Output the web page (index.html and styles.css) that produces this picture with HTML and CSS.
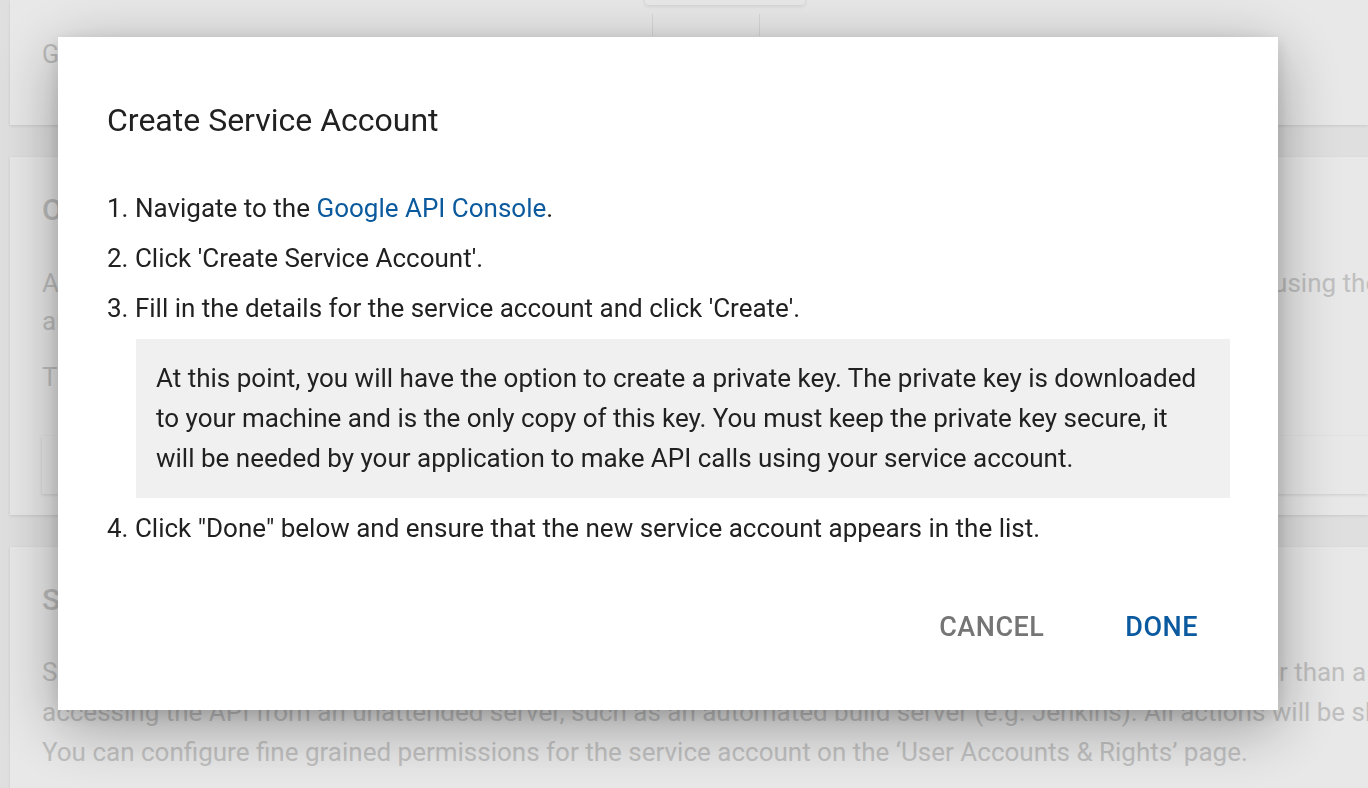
FILE: index.html
```html
<!DOCTYPE html>
<html lang="en">
<head>
<meta charset="utf-8">
<title>Create Service Account</title>
<link rel="stylesheet" href="styles.css">
</head>
<body>
<div class="page">
  <div class="top-tab"></div>
  <section class="card card-general">
    <div class="card-title small">General</div>
    <div class="field-box"></div>
  </section>
  <section class="card card-clients">
    <div class="card-title">OAuth Clients</div>
    <p class="card-text">Applications can access the API on behalf of a user by authenticating with the OAuth 2.0 protocol flow and using the<br>authorization code flow to obtain an access token for the user.</p>
    <p class="card-text">There are no OAuth clients configured.</p>
    <div class="inner-box"></div>
  </section>
  <section class="card card-service">
    <div class="card-title">Service Accounts</div>
    <p class="card-text">Service accounts can be used in cases where the API needs to be accessed by an external application rather than a user, for example when<br>accessing the API from an unattended server, such as an automated build server (e.g. Jenkins). All actions will be shown as performed by the service account.<br>You can configure fine grained permissions for the service account on the ‘User Accounts &amp; Rights’ page.</p>
  </section>
</div>
<div class="overlay"></div>
<div class="dialog" role="dialog">
  <h1 class="dialog-title">Create Service Account</h1>
  <ol class="steps">
    <li>1. Navigate to the <a class="link" href="#">Google API Console</a>.</li>
    <li>2. Click 'Create Service Account'.</li>
    <li>3. Fill in the details for the service account and click 'Create'.
      <div class="note">At this point, you will have the option to create a private key. The private key is downloaded to your machine and is the only copy of this key. You must keep the private key secure, it will be needed by your application to make API calls using your service account.</div>
    </li>
    <li>4. Click "Done" below and ensure that the new service account appears in the list.</li>
  </ol>
  <div class="actions">
    <button class="btn btn-cancel">Cancel</button>
    <button class="btn btn-done">Done</button>
  </div>
</div>
</body>
</html>
```

FILE: styles.css
```css
* { box-sizing: border-box; }
html, body {
  margin: 0;
  padding: 0;
  height: 100%;
  overflow: hidden;
}
body {
  font-family: Roboto, "Liberation Sans", sans-serif;
  background: #f6f6f6;
  color: #212121;
}
.page {
  padding: 0 0 0 10px;
  display: flex;
  flex-direction: column;
  gap: 32px;
  position: relative;
}
.top-tab {
  position: absolute;
  left: 645px;
  top: -20px;
  width: 160px;
  height: 25px;
  background: #fff;
  border-radius: 4px;
  box-shadow: 0 1px 4px rgba(0,0,0,0.12);
}
.card {
  background: #fff;
  padding: 0 0 0 32px;
  box-shadow: 0 1px 3px rgba(0,0,0,0.1);
  white-space: nowrap;
  overflow: hidden;
}
.card-general {
  height: 125px;
  display: flex;
  padding-top: 35px;
  gap: 40px;
}
.card-title {
  font-size: 30px;
  line-height: 40px;
  color: #cfcfcf;
  font-weight: 500;
}
.card-title.small {
  font-size: 25px;
  font-weight: 400;
  width: 570px;
}
.field-box {
  width: 108px;
  height: 22px;
  margin-top: -21px;
  border-left: 1px solid #ececec;
  border-right: 1px solid #ececec;
}
.card-clients {
  height: 358px;
  padding-top: 33px;
}
.card-text {
  margin: 0;
  font-size: 26px;
  line-height: 38px;
  color: #d3d3d3;
}
.card-clients .card-title { margin-bottom: 34px; }
.card-clients .card-text + .card-text { margin-top: 18px; }
.inner-box {
  margin-top: 40px;
  height: 58px;
  box-shadow: 0 1px 3px rgba(0,0,0,0.12);
}
.card-service {
  height: 300px;
  padding-top: 33px;
}
.card-service .card-title { margin-bottom: 32px; }
.card-service .card-text { line-height: 40px; }

.overlay {
  position: fixed;
  inset: 0;
  background: rgba(0,0,0,0.09);
}

.dialog {
  position: fixed;
  left: 58px;
  top: 37px;
  width: 1220px;
  height: 673px;
  background: #fff;
  padding: 63px 48px 0 49px;
  box-shadow: 0 16px 60px rgba(0,0,0,0.34), 0 4px 16px rgba(0,0,0,0.12);
  display: flex;
  flex-direction: column;
}
.dialog-title {
  margin: 0;
  font-size: 32px;
  line-height: 40px;
  font-weight: 400;
  color: #212121;
}
.steps {
  list-style: none;
  margin: 48px 0 0;
  padding: 0;
  font-size: 26px;
  line-height: 40px;
  color: #212121;
}
.steps li { margin-bottom: 10px; }
.link {
  color: #0b5a9e;
  text-decoration: none;
}
.note {
  margin: 11px 0 0 29px;
  background: #f0f0f0;
  padding: 19px 20px 20px 20px;
  line-height: 40px;
}
.actions {
  display: flex;
  justify-content: flex-end;
  gap: 49px;
  margin-top: 41px;
  padding-right: 16px;
}
.btn {
  font-family: Roboto, "Liberation Sans", sans-serif;
  font-size: 27px;
  font-weight: 500;
  letter-spacing: 0.5px;
  text-transform: uppercase;
  background: none;
  border: 0;
  height: 56px;
  padding: 0 16px;
  cursor: pointer;
}
.btn-cancel { color: #757575; }
.btn-done { color: #0b5aa0; }
```
